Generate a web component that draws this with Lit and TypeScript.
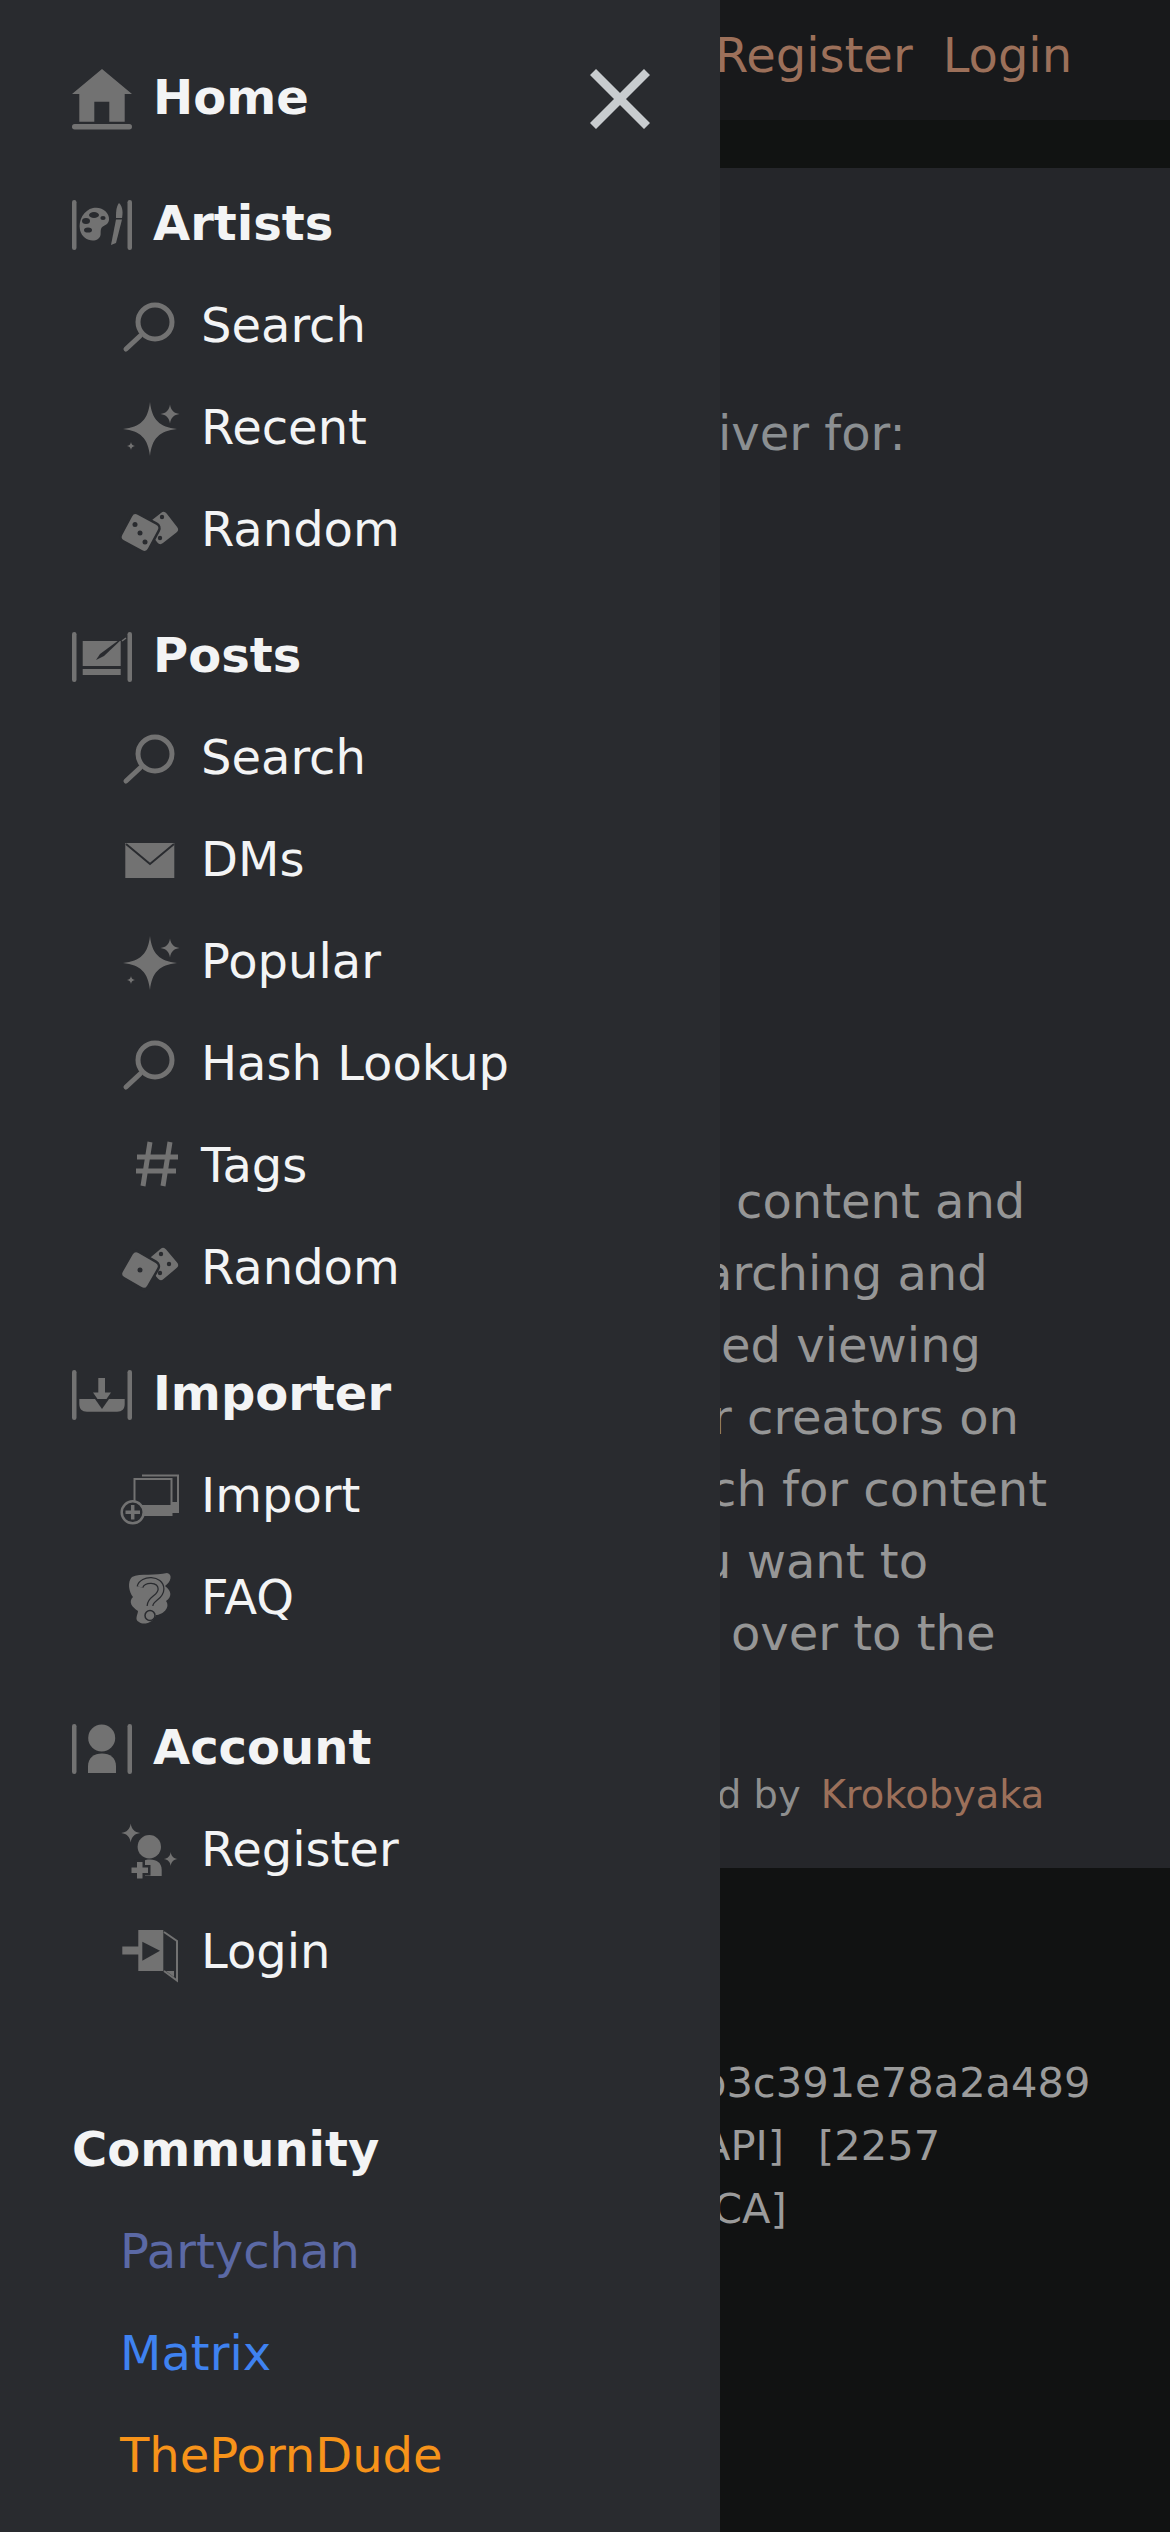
import { LitElement, html, css, svg } from 'lit';
import { customElement } from 'lit/decorators.js';

const star = (x: number, y: number, r: number, fat = 0.35) => {
  const a = r * fat * 0.2;
  const b = r * fat;
  return svg`<path d="M${x} ${y - r}C${x + a} ${y - b} ${x + b} ${y - a} ${x + r} ${y}C${x + b} ${y + a} ${x + a} ${y + b} ${x} ${y + r}C${x - a} ${y + b} ${x - b} ${y + a} ${x - r} ${y}C${x - b} ${y - a} ${x - a} ${y - b} ${x} ${y - r}Z" />`;
};

const bars = (y1: number, y2: number) => svg`
  <rect x="0" y=${y1} width="4.5" height=${y2 - y1} rx="2.2" />
  <rect x="55.5" y=${y1} width="4.5" height=${y2 - y1} rx="2.2" />`;

const search = svg`
  <circle class="line" cx="35" cy="27" r="17" stroke-width="5" />
  <path class="line" d="M20 41L6 54" stroke-width="5" stroke-linecap="round" />`;

const sparkles = svg`${star(30, 32, 27)}${star(50, 17, 9.5, 0.4)}${star(11, 49, 4, 0.4)}`;

const icons: Record<string, unknown> = {
  home: svg`
    <path d="M30 2L60 27H52.7V54.7H37.3V34.7H22.3V54.7H7.3V27H0Z" />
    <rect x="0" y="57" width="60" height="5.4" rx="2.7" />`,
  artists: svg`
    ${bars(7, 57)}
    <path d="M21 15C30 13 38 20 37 27C36 33 30 32 29 36C28 40 30 43 26 46C20 50 10 46 8 37C6 27 12 17 21 15Z" />
    <ellipse class="cut" cx="22" cy="22" rx="5" ry="3" />
    <ellipse class="cut" cx="14" cy="28" rx="4" ry="3" />
    <ellipse class="cut" cx="16" cy="37" rx="4" ry="2.6" />
    <ellipse class="cut" cx="31" cy="25" rx="2.6" ry="2" />
    <path d="M47 10C51 14 51 20 50 25H44C44 19 44 14 47 10Z" />
    <path d="M44 26.500H50L44 50L39 52Z" />`,
  search,
  sparkles,
  dice: svg`
    <rect x="29.500" y="16.500" width="25" height="25" rx="4" transform="rotate(-38 42 29)" />
    <rect class="edge" x="5.500" y="19" width="29" height="29" rx="4" transform="rotate(28 20 33.500)" />
    <circle class="cut" cx="15" cy="25.500" r="2.500" />
    <circle class="cut" cx="20" cy="34" r="2.500" />
    <circle class="cut" cx="25" cy="43" r="2.500" />
    <circle class="cut" cx="42" cy="18" r="2.200" />
    <circle class="cut" cx="40" cy="39" r="2.200" />`,
  dice2: svg`
    <rect x="29.500" y="14.500" width="25" height="25" rx="4" transform="rotate(-40 42 27)" />
    <rect class="edge" x="6" y="19" width="28" height="28" rx="4" transform="rotate(30 20 33)" />
    <circle class="cut" cx="20" cy="33" r="2.500" />
    <circle class="cut" cx="41" cy="17" r="2.200" />
    <circle class="cut" cx="49" cy="27" r="2.200" />
    <circle class="cut" cx="40" cy="36" r="2.200" />`,
  posts: svg`
    ${bars(7, 57)}
    <rect x="10.700" y="16" width="38" height="25" />
    <rect x="10.700" y="44" width="38" height="6" />
    <path class="cut" d="M24 35L28 29L47 15L51 13L32 31Z" />
    <path d="M50 16L54 13" class="line" stroke-width="1.5" />`,
  mail: svg`
    <path d="M5.300 14H54.300V49H5.300Z" />
    <path class="trace" stroke-width="2" d="M6 15L30 35L54 15" />`,
  hash: svg`
    <path class="line" stroke-width="5" d="M30 7L23 51M50 7L43 51M17 22H58M16 36H56" />`,
  importer: svg`
    ${bars(7, 57)}
    <path d="M7.300 36H52.700V41C52.700 46 50 48.700 45 48.700H15C10 48.700 7.300 46 7.300 41Z" />
    <path class="cut" d="M23 36H37L30 46Z" />
    <path d="M26.300 15H33V29.500H39L34.500 36H25.500L21 29.500H26.300Z" />`,
  import: svg`
    <path class="line" stroke-width="2" d="M22 10.500H58V47H51" />
    <path d="M51 37H59V47.500H51Z" />
    <rect class="line" x="14.500" y="14" width="37" height="36" stroke-width="2" />
    <rect x="14" y="40" width="38" height="11" />
    <circle class="disc" cx="12.700" cy="47.300" r="11" stroke-width="2.500" />
    <path class="line" stroke-width="3.500" d="M12.700 40V54.500M5.500 47.300H20" />`,
  faq: svg`
    <path d="M12 10C20 6 36 9 47 6C53 7 51 15 45 19C52 24 52 30 46 34C51 41 42 48 36 48C34 55 24 59 19 55C14 53 18 47 18 44C12 40 8 35 13 30C9 25 7 15 12 10Z" />
    <path class="trace" stroke-width="7" d="M20 20C22 11 41 11 41 22C41 31 30 31 30 39" />
    <path class="line" stroke-width="4.500" d="M20 20C22 11 41 11 41 22C41 31 30 31 30 39" />
    <circle class="ring" cx="30" cy="48.500" r="5" stroke-width="1.500" />`,
  account: svg`
    ${bars(7, 57)}
    <circle cx="29.700" cy="21" r="13.500" />
    <path d="M16 56V49C16 41 22 36.500 30 36.500C38 36.500 44 41 44 49V56Z" />`,
  register: svg`
    ${star(10.7, 14, 9.5, 0.4)}${star(50.7, 40, 7, 0.4)}
    <circle cx="29.300" cy="27.700" r="11.700" />
    <path d="M18 57V49C18 43 24 40.500 30 40.500C37 40.500 41.700 44 41.700 51V57Z" />
    <path class="edge" d="M17 43H22.500V48.500H28V54H22.500V59.500H17V54H11.500V48.500H17Z" />`,
  login: svg`
    <rect x="18.300" y="9" width="25" height="41" />
    <rect x="2.300" y="25.500" width="17" height="8" />
    <path class="cut" d="M22.300 20.700L40 29.700L22.300 39.700Z" />
    <path class="line" stroke-width="2" d="M44 11L57 20V59.500L44 50" />
    <path d="M46 50H54V56Z" />`,
};

interface Link { label: string; icon: string; }
interface Group { label: string; icon: string; cls?: string; items: Link[]; }

const groups: Group[] = [
  {
    label: 'Artists', icon: 'artists',
    items: [
      { label: 'Search', icon: 'search' },
      { label: 'Recent', icon: 'sparkles' },
      { label: 'Random', icon: 'dice' },
    ],
  },
  {
    label: 'Posts', icon: 'posts',
    items: [
      { label: 'Search', icon: 'search' },
      { label: 'DMs', icon: 'mail' },
      { label: 'Popular', icon: 'sparkles' },
      { label: 'Hash Lookup', icon: 'search' },
      { label: 'Tags', icon: 'hash' },
      { label: 'Random', icon: 'dice2' },
    ],
  },
  {
    label: 'Importer', icon: 'importer',
    items: [
      { label: 'Import', icon: 'import' },
      { label: 'FAQ', icon: 'faq' },
    ],
  },
  {
    label: 'Account', icon: 'account', cls: 'wide',
    items: [
      { label: 'Register', icon: 'register' },
      { label: 'Login', icon: 'login' },
    ],
  },
];

// what shows of the page behind the drawer, x is where each line starts
const bodyLines = [
  { text: 'content and', x: 736 },
  { text: 'arching and', x: 703 },
  { text: 'ed viewing', x: 721 },
  { text: 'r creators on', x: 712 },
  { text: 'ch for content', x: 710 },
  { text: 'u want to', x: 701 },
  { text: 'over to the', x: 731 },
];

@customElement('app-root')
export class AppRoot extends LitElement {
  static styles = css`
    :host {
      display: block;
      position: relative;
      width: 1170px;
      height: 2532px;
      overflow: hidden;
      font-family: 'DejaVu Sans', sans-serif;
      font-size: 48px;
      background: #111212;
    }

    .page { display: flex; flex-direction: column; height: 100%; }

    .top {
      display: flex;
      gap: 30px;
      height: 120px;
      padding-left: 715px;
      box-sizing: border-box;
      line-height: 110px;
      background: #18191b;
    }
    .top a, .credit a { color: #9c705a; text-decoration: none; }

    .strip { height: 48px; background: #111312; }

    .main {
      height: 1700px;
      padding-top: 229px;
      box-sizing: border-box;
      background: #25262a;
      color: #8b8f92;
      line-height: 72px;
      white-space: nowrap;
    }
    .intro { padding-left: 718px; }
    .copy { margin-top: 696px; color: #969696; }
    .credit {
      display: flex;
      gap: 20px;
      margin-top: 97px;
      padding-left: 717px;
      font-size: 38.4px;
      line-height: 58px;
      color: #8e8e8e;
    }

    .foot {
      flex: 1;
      padding-top: 183px;
      font-size: 41.6px;
      line-height: 63px;
      color: #9b9b9b;
      white-space: nowrap;
    }
    .pair { display: flex; gap: 34px; }

    .drawer {
      position: absolute;
      top: 0;
      left: 0;
      bottom: 0;
      width: 720px;
      padding-top: 46px;
      box-sizing: border-box;
      background: #292b2f;
      color: #f3f4f5;
    }

    .row {
      display: flex;
      align-items: center;
      gap: 21px;
      height: 102px;
      padding-left: 72px;
      white-space: nowrap;
    }
    .row.head { font-weight: 700; }
    .row.child { padding-left: 120px; }
    .row.first { padding-right: 70px; }

    .group { margin-top: 24px; }
    .group.wide { margin-top: 48px; }

    .icon {
      flex: none;
      width: 60px;
      height: 60px;
      overflow: visible;
      fill: #727272;
    }
    .icon .cut { fill: #292b2f; }
    .icon .line { fill: none; stroke: #727272; }
    .icon .trace { fill: none; stroke: #292b2f; }
    .icon .disc { fill: #292b2f; stroke: #727272; }
    .icon .ring { fill: #727272; stroke: #292b2f; }
    .icon .edge { stroke: #292b2f; stroke-width: 5; paint-order: stroke; }

    .close {
      flex: none;
      margin-left: auto;
      width: 60px;
      height: 60px;
      margin-top: 3px;
      stroke: #c8cccf;
      stroke-width: 8.5;
    }

    .community { margin-top: 96px; }
    .row.ext { padding-left: 120px; }
    .party { color: #5b69a5; }
    .matrix { color: #3f82f0; }
    .dude { color: #f7931a; }
  `;

  private icon(name: string) {
    return html`<svg class="icon" viewBox="0 0 60 60">${icons[name]}</svg>`;
  }

  private renderGroup(g: Group) {
    return html`
      <div class="group ${g.cls ?? ''}">
        <div class="row head">${this.icon(g.icon)}<span>${g.label}</span></div>
        ${g.items.map(
          (i) => html`<div class="row child">${this.icon(i.icon)}<span>${i.label}</span></div>`,
        )}
      </div>
    `;
  }

  render() {
    return html`
      <div class="page">
        <div class="top"><a>Register</a><a>Login</a></div>
        <div class="strip"></div>
        <div class="main">
          <div class="intro">iver for:</div>
          <div class="copy">
            ${bodyLines.map((l) => html`<div style="padding-left:${l.x}px">${l.text}</div>`)}
          </div>
          <div class="credit"><span>d by</span><a>Krokobyaka</a></div>
        </div>
        <div class="foot">
          <div style="padding-left:700px">b3c391e78a2a489</div>
          <div class="pair" style="padding-left:702px"><span>API]</span><span>[2257</span></div>
          <div style="padding-left:713px">CA]</div>
        </div>
      </div>

      <nav class="drawer">
        <div class="row head first">
          ${this.icon('home')}<span>Home</span>
          <svg class="close" viewBox="0 0 60 60"><path d="M3 3L57 57M57 3L3 57" /></svg>
        </div>
        ${groups.map((g) => this.renderGroup(g))}
        <div class="community">
          <div class="row head">Community</div>
          <div class="row ext party">Partychan</div>
          <div class="row ext matrix">Matrix</div>
          <div class="row ext dude">ThePornDude</div>
        </div>
      </nav>
    `;
  }
}
